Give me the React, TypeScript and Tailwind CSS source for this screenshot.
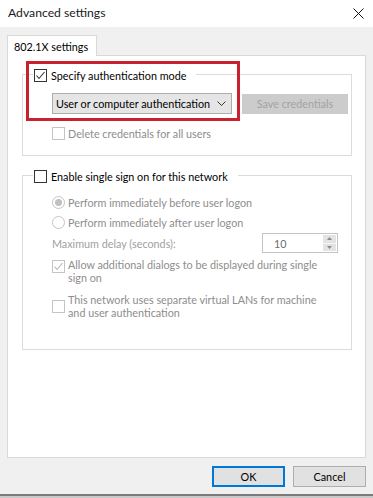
import type { ReactNode } from "react";

const font = { fontFamily: 'Lato, "Liberation Sans", Arial, sans-serif' };

function CheckBox({ checked = false, disabled = false }: { checked?: boolean; disabled?: boolean }) {
  return (
    <span
      className={`flex h-[13px] w-[13px] shrink-0 items-center justify-center border bg-white ${
        disabled ? "border-[#c4c4c4]" : "border-[#333333]"
      }`}
    >
      {checked && (
        <svg width="11" height="11" viewBox="0 0 11 11">
          <path
            d="M1.5 5.5 L4 8.5 L9.5 2"
            fill="none"
            stroke={disabled ? "#b4b4b4" : "#333333"}
            strokeWidth="1.1"
          />
        </svg>
      )}
    </span>
  );
}

function Radio({ checked = false }: { checked?: boolean }) {
  return (
    <span className="flex h-[13px] w-[13px] shrink-0 items-center justify-center rounded-full border border-[#c4c4c4] bg-white">
      {checked && <span className="h-[7px] w-[7px] rounded-full bg-[#c0c0c0]" />}
    </span>
  );
}

function GroupBox({ header, height, children }: { header: ReactNode; height: string; children: ReactNode }) {
  return (
    <div className={`ml-[14px] w-[330px] border border-[#dcdcdc] ${height}`}>
      <div className="-mt-[7px] ml-[10px] flex h-[14px] w-fit items-center whitespace-nowrap bg-white pl-[1px] pr-[10px]">
        {header}
      </div>
      {children}
    </div>
  );
}

export default function App() {
  return (
    <div className="relative flex h-[498px] w-[373px] flex-col overflow-hidden whitespace-nowrap bg-[#f0f0f0] text-[10.8px] leading-[13px] text-black" style={font}>
      {/* Title bar */}
      <div className="flex h-[27px] shrink-0 items-center justify-between bg-white pl-[8px] pr-[9px]">
        <span className="text-[12.2px] leading-none text-[#1a1a1a]">Advanced settings</span>
        <svg width="11" height="11" viewBox="0 0 11 11">
          <path d="M0.5 0.5 L10.5 10.5 M10.5 0.5 L0.5 10.5" stroke="#111" strokeWidth="1" />
        </svg>
      </div>

      <div className="flex flex-col px-[7px] pt-[8px]">
        {/* Tab strip */}
        <div className="relative z-10 -mb-px flex h-[21px] w-[90px] items-center border border-b-0 border-[#d9d9d9] bg-white pl-[6px]">
          802.1X settings
        </div>

        {/* Tab page */}
        <div className="flex h-[403px] w-[359px] flex-col border border-[#d9d9d9] bg-white pt-[18px]">
          <GroupBox
            height="h-[82px]"
            header={
              <>
                <CheckBox checked />
                <span className="ml-[4px]">Specify authentication mode</span>
              </>
            }
          >
            <div className="ml-[29px] mt-[11px] flex items-center">
              <div className="flex h-[21px] w-[180px] items-center justify-between border border-[#adadad] bg-[#e5e5e5] pl-[3px] pr-[5px]">
                <span>User or computer authentication</span>
                <svg width="9" height="6" viewBox="0 0 9 6">
                  <path d="M0.5 0.5 L4.5 4.5 L8.5 0.5" fill="none" stroke="#333" strokeWidth="1" />
                </svg>
              </div>
              <div className="ml-[10px] flex h-[20px] w-[106px] items-center justify-center bg-[#cccccc] text-[#a3a3a3]">
                Save credentials
              </div>
            </div>
            <div className="ml-[29px] mt-[13px] flex items-center text-[#8d8d8d]">
              <CheckBox disabled />
              <span className="ml-[3px]">Delete credentials for all users</span>
            </div>
          </GroupBox>

          <div className="mt-[19px]">
            <GroupBox
              height="h-[175px]"
              header={
                <>
                  <CheckBox />
                  <span className="ml-[4px]">Enable single sign on for this network</span>
                </>
              }
            >
              <div className="ml-[29px] flex flex-col text-[#8d8d8d]">
                <div className="mt-[12px] flex h-[14px] items-center">
                  <Radio checked />
                  <span className="ml-[3px]">Perform immediately before user logon</span>
                </div>
                <div className="mt-[6px] flex h-[14px] items-center">
                  <Radio />
                  <span className="ml-[3px]">Perform immediately after user logon</span>
                </div>
                <div className="mt-[4px] flex h-[20px] items-center justify-between pr-[13px]">
                  <span className="text-[#a0a0a0]">Maximum delay (seconds):</span>
                  <div className="flex h-[20px] w-[76px] border border-[#c4c4c4] bg-white">
                    <span className="flex flex-1 items-center pl-[11px] text-[#6d6d6d]">10</span>
                    <div className="my-[1px] mr-[1px] flex w-[13px] flex-col bg-[#e3e3e3]">
                      <span className="flex flex-1 items-center justify-center border-b border-[#f4f4f4]">
                        <svg width="5" height="3" viewBox="0 0 5 3">
                          <path d="M0 3 L2.5 0 L5 3 Z" fill="#8a8a8a" />
                        </svg>
                      </span>
                      <span className="flex flex-1 items-center justify-center">
                        <svg width="5" height="3" viewBox="0 0 5 3">
                          <path d="M0 0 L2.5 3 L5 0 Z" fill="#8a8a8a" />
                        </svg>
                      </span>
                    </div>
                  </div>
                </div>
                <div className="mt-[5px] flex items-start">
                  <span className="mt-[2px]">
                    <CheckBox checked disabled />
                  </span>
                  <span className="ml-[3px]">
                    Allow additional dialogs to be displayed during single
                    <br />
                    sign on
                  </span>
                </div>
                <div className="mt-[9px] flex items-center">
                  <CheckBox disabled />
                  <span className="ml-[3px]">
                    This network uses separate virtual LANs for machine
                    <br />
                    and user authentication
                  </span>
                </div>
              </div>
            </GroupBox>
          </div>
        </div>

        {/* Dialog buttons */}
        <div className="mt-[8px] flex justify-end gap-[8px]">
          <button className="flex h-[21px] w-[73px] items-center justify-center border-2 border-[#0078d7] bg-[#e1e1e1]">
            OK
          </button>
          <button className="flex h-[21px] w-[73px] items-center justify-center border border-[#adadad] bg-[#e1e1e1]">
            Cancel
          </button>
        </div>
      </div>

      <div className="mt-auto h-[2px] bg-[#7a7a7a]" />
      <div className="h-[2px] bg-[#c9c9c9]" />

      {/* Red annotation box */}
      <div className="pointer-events-none absolute left-[26px] top-[61px] h-[60px] w-[214px] border-[3px] border-[#c8222e]" />
    </div>
  );
}
